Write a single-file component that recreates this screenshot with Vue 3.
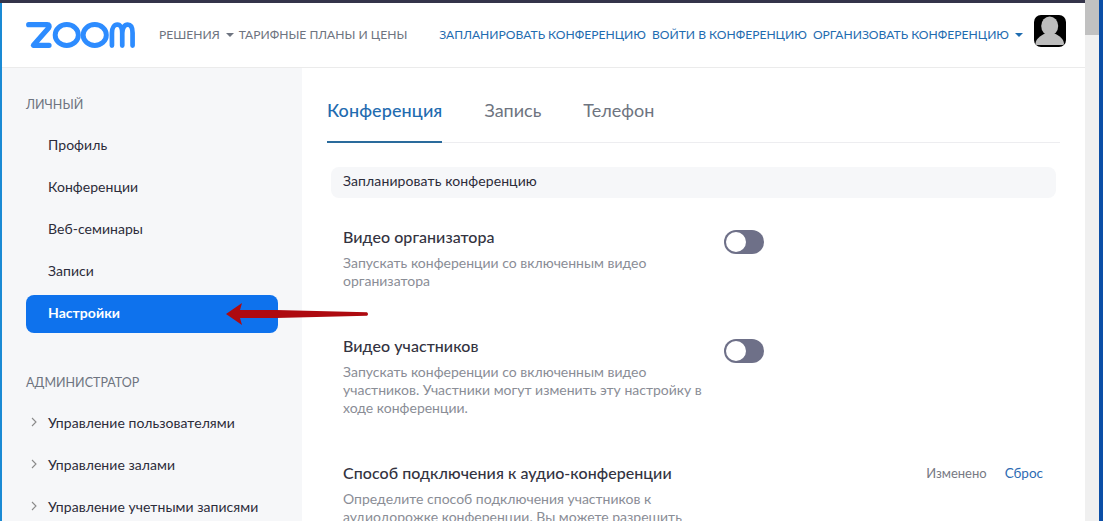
<template>
  <div class="window">
    <div class="page">
      <div class="topbar"></div>
      <div class="inner">
        <header class="header">
          <svg class="logo" viewBox="0 0 112 26" width="110" height="26" preserveAspectRatio="none">
            <path d="M2.7 2.7H21.5Q24.8 2.7 23 6L7.5 23.3H23.5" fill="none" stroke="#2d8cff" stroke-width="5.2" stroke-linejoin="round" stroke-linecap="round" />
            <ellipse cx="41.5" cy="13" rx="11.8" ry="10.5" fill="none" stroke="#2d8cff" stroke-width="5" />
            <ellipse cx="70" cy="13" rx="11.8" ry="10.5" fill="none" stroke="#2d8cff" stroke-width="5" />
            <path d="M87.5 23.5V11C87.5 5.5 90 2.7 93 2.7C96 2.7 98 6 98 11V23.5M98 11C98 6 100.5 2.7 103.5 2.7C106.5 2.7 108.5 5.5 108.5 11V23.5" fill="none" stroke="#2d8cff" stroke-width="4.8" stroke-linecap="round" />
          </svg>
          <nav class="nav-left">
            <a class="dropdown">РЕШЕНИЯ<i class="caret"></i></a>
            <a>ТАРИФНЫЕ ПЛАНЫ И ЦЕНЫ</a>
          </nav>
          <nav class="nav-right">
            <a>ЗАПЛАНИРОВАТЬ КОНФЕРЕНЦИЮ</a>
            <a>ВОЙТИ В КОНФЕРЕНЦИЮ</a>
            <a class="dropdown">ОРГАНИЗОВАТЬ КОНФЕРЕНЦИЮ<i class="caret"></i></a>
          </nav>
          <svg class="avatar" viewBox="0 0 32 32" width="32" height="32">
            <rect width="32" height="32" rx="7" fill="#000" />
            <ellipse cx="15.7" cy="11" rx="8.5" ry="9.5" fill="#bdbdbd" />
            <path d="M1.5 28.5C2 23.5 7 20.5 11 18.5H20.5C25 20.5 29.5 23.5 30 28.5Q30 30 28.5 30H3Q1.5 30 1.5 28.5Z" fill="#bdbdbd" />
          </svg>
        </header>

        <div class="body">
          <aside class="sidebar">
            <div class="group-title">ЛИЧНЫЙ</div>
            <a v-for="item in personal" :key="item" class="side-item" :class="{ active: item === 'Настройки' }">{{ item }}</a>
            <div class="group-title admin">АДМИНИСТРАТОР</div>
            <a v-for="item in admin" :key="item" class="side-item">
              <svg class="chevron" viewBox="0 0 6 10" width="6" height="10">
                <path d="M1 1L5 5L1 9" fill="none" stroke="#8a8a8a" stroke-width="1.1" />
              </svg>
              {{ item }}
            </a>
          </aside>

          <main class="main">
            <div class="tabs">
              <span class="tab selected">Конференция</span>
              <span class="tab">Запись</span>
              <span class="tab">Телефон</span>
            </div>
            <div class="section-bar">Запланировать конференцию</div>

            <div class="setting">
              <div class="setting-text">
                <h4>Видео организатора</h4>
                <p>Запускать конференции со включенным видео организатора</p>
              </div>
              <span class="toggle"></span>
            </div>

            <div class="setting next">
              <div class="setting-text">
                <h4>Видео участников</h4>
                <p>Запускать конференции со включенным видео участников. Участники могут изменить эту настройку в ходе конференции.</p>
              </div>
              <span class="toggle"></span>
            </div>

            <div class="setting next">
              <div class="setting-text wide">
                <div class="title-row">
                  <h4>Способ подключения к аудио-конференции</h4>
                  <span class="changed">Изменено</span>
                  <a class="reset">Сброс</a>
                </div>
                <p class="narrow">Определите способ подключения участников к аудиодорожке конференции. Вы можете разрешить</p>
              </div>
            </div>
          </main>
        </div>
      </div>
    </div>

    <div class="scrollbar"><div class="thumb"></div></div>

    <!-- red arrow drawn over the screenshot -->
    <svg class="arrow" viewBox="0 0 146 24" width="146" height="24">
      <path d="M2 12L18 1L16 8L52 8L143 10.2Q145 12 143 13.8L52 16L16 16L18 23Z" fill="#ae0a10" />
    </svg>
  </div>
</template>

<script setup>
const personal = ['Профиль', 'Конференции', 'Веб-семинары', 'Записи', 'Настройки']
const admin = ['Управление пользователями', 'Управление залами', 'Управление учетными записями']
</script>

<style>
html, body {
  margin: 0;
  overflow: hidden;
}
</style>

<style scoped>
.window {
  position: relative;
  display: flex;
  width: 1103px;
  height: 521px;
  overflow: hidden;
  box-sizing: border-box;
  border-right: 4px solid #0b4ea6;
  background: #fff;
  font-family: Lato, "Open Sans", sans-serif;
  color: #2c2c3a;
}

.page {
  display: flex;
  flex-direction: column;
  flex: 1;
  min-width: 0;
}

.topbar {
  height: 3px;
  flex: none;
  background: #34344a;
}

.inner {
  display: flex;
  flex-direction: column;
  flex: 1;
  min-height: 0;
  border-left: 2px solid #1a8ad4;
}

.header {
  display: flex;
  align-items: center;
  height: 65px;
  flex: none;
  box-sizing: border-box;
  padding: 0 19px 0 24px;
  border-bottom: 1px solid #ebebeb;
}

.logo {
  flex: none;
  margin-bottom: 1px;
}

.nav-left {
  display: flex;
  gap: 5px;
  margin-left: 23px;
  margin-bottom: 2px;
  color: #6e7480;
  white-space: nowrap;
  font-size: 12.1px;
}

.nav-right {
  display: flex;
  gap: 6px;
  margin-left: auto;
  margin-bottom: 2px;
  color: #1f6cb0;
  white-space: nowrap;
  font-size: 12.1px;
}

.caret {
  display: inline-block;
  margin-left: 6px;
  vertical-align: middle;
  border-top: 4px solid currentColor;
  border-left: 4px solid transparent;
  border-right: 4px solid transparent;
}

.avatar {
  flex: none;
  margin-left: 11px;
  margin-bottom: 8px;
}

.body {
  display: flex;
  flex: 1;
  min-height: 0;
}

.sidebar {
  width: 300px;
  flex: none;
  box-sizing: border-box;
  padding: 29px 24px 0;
  background: #f6f7f9;
  overflow: hidden;
}

.group-title {
  font-size: 12.5px;
  line-height: 16px;
  color: #6e7480;
  margin-bottom: 14px;
}

.group-title.admin {
  margin-top: 42px;
  margin-bottom: 14px;
}

.side-item {
  display: flex;
  align-items: center;
  position: relative;
  height: 38px;
  box-sizing: border-box;
  margin-bottom: 4px;
  padding: 0 0 4px 22px;
  font-size: 14px;
  color: #2c2c3a;
  white-space: nowrap;
  border-radius: 8px;
  letter-spacing: 0.05px;
}

.side-item.active {
  background: #0e72ed;
  color: #fff;
  font-weight: 700;
}

.chevron {
  position: absolute;
  left: 5px;
  top: 12px;
}

.main {
  flex: 1;
  min-width: 0;
  box-sizing: border-box;
  padding: 0 25px;
  overflow: hidden;
}

.tabs {
  display: flex;
  gap: 42px;
  height: 75px;
  box-sizing: border-box;
  border-bottom: 1px solid #ededf0;
  font-size: 18px;
  color: #6e7480;
}

.tab {
  padding-top: 31px;
  height: 75px;
  box-sizing: border-box;
  white-space: nowrap;
}

.tab.selected {
  color: #1f6cb0;
  font-weight: 500;
  border-bottom: 2px solid #2a6b9c;
  letter-spacing: 0.1px;
}

.section-bar {
  margin: 24px 4px 0;
  height: 31px;
  line-height: 28px;
  padding-left: 12px;
  background: #f6f7f9;
  border-radius: 8px;
  font-size: 14px;
  letter-spacing: 0.1px;
}

.setting {
  display: flex;
  margin: 28px 16px 0;
}

.setting.next {
  margin-top: 45px;
}

.setting-text {
  width: 364px;
}

.setting-text.wide {
  width: 100%;
}

.setting h4 {
  margin: 0;
  font-size: 16px;
  line-height: 22px;
  font-weight: 500;
  letter-spacing: 0.05px;
  color: #33333f;
}

.setting p {
  margin: 6px 0 0;
  font-size: 14px;
  line-height: 18px;
  color: #8a8d96;
}

.setting p.narrow {
  width: 364px;
}

.title-row {
  display: flex;
  align-items: center;
  font-size: 13.5px;
}

.changed {
  margin-left: auto;
  font-size: 13px;
  color: #777a84;
}

.reset {
  margin-left: 18px;
  margin-right: 1px;
  color: #2d6bb3;
}

.toggle {
  position: relative;
  flex: none;
  width: 40px;
  height: 24px;
  margin-left: 17px;
  margin-top: 4px;
  box-sizing: border-box;
  border-radius: 12px;
  background: #6e7088;
}

.toggle::after {
  content: '';
  position: absolute;
  left: 2px;
  top: 2px;
  width: 20px;
  height: 20px;
  border-radius: 50%;
  background: #fff;
}

.scrollbar {
  width: 14px;
  flex: none;
  background: #f0f0f0;
}

.thumb {
  height: 35px;
  background: #c1c1c1;
}

.arrow {
  position: absolute;
  left: 224px;
  top: 302px;
}
</style>
